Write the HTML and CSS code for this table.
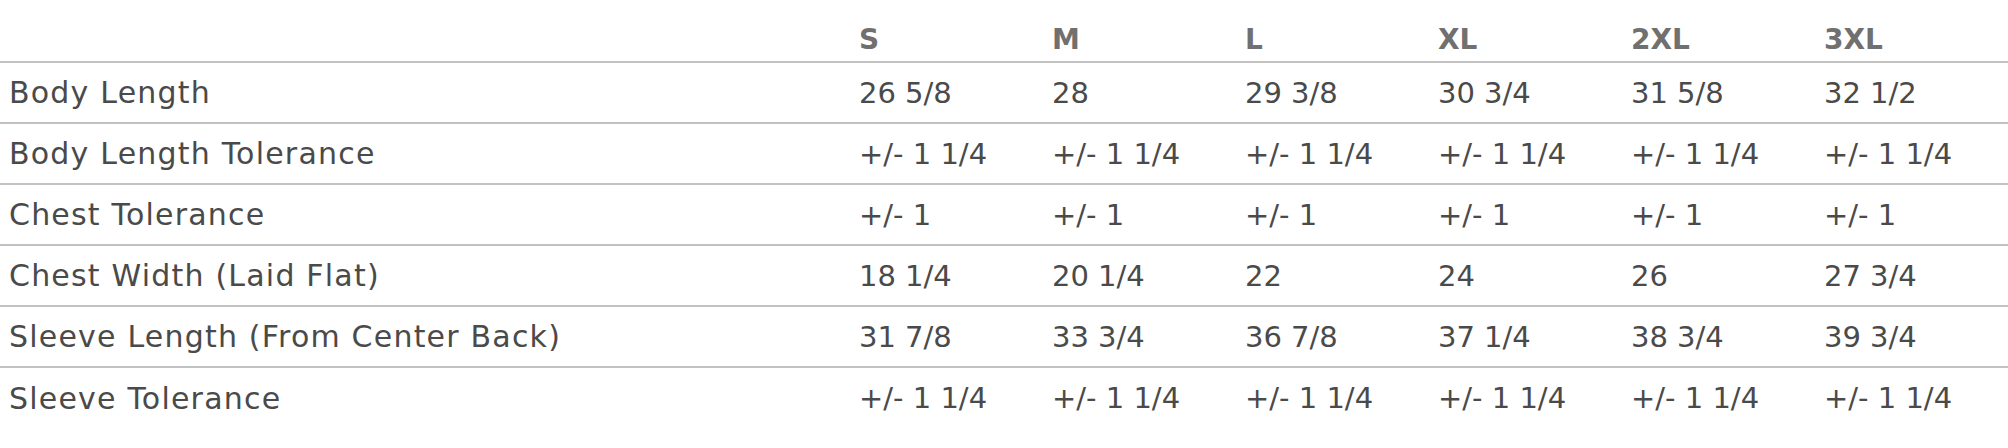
FILE: index.html
```html
<!DOCTYPE html>
<html lang="en">
<head>
<meta charset="utf-8">
<title>Size Chart</title>
<link rel="stylesheet" href="styles.css">
</head>
<body>
<table class="size-chart">
  <colgroup>
    <col class="col-label">
    <col class="col-size"><col class="col-size"><col class="col-size">
    <col class="col-size"><col class="col-size"><col class="col-size">
  </colgroup>
  <thead>
    <tr>
      <th></th><th>S</th><th>M</th><th>L</th><th>XL</th><th>2XL</th><th>3XL</th>
    </tr>
  </thead>
  <tbody>
    <tr><td class="label">Body Length</td><td>26 5/8</td><td>28</td><td>29 3/8</td><td>30 3/4</td><td>31 5/8</td><td>32 1/2</td></tr>
    <tr><td class="label">Body Length Tolerance</td><td>+/- 1 1/4</td><td>+/- 1 1/4</td><td>+/- 1 1/4</td><td>+/- 1 1/4</td><td>+/- 1 1/4</td><td>+/- 1 1/4</td></tr>
    <tr><td class="label">Chest Tolerance</td><td>+/- 1</td><td>+/- 1</td><td>+/- 1</td><td>+/- 1</td><td>+/- 1</td><td>+/- 1</td></tr>
    <tr><td class="label">Chest Width (Laid Flat)</td><td>18 1/4</td><td>20 1/4</td><td>22</td><td>24</td><td>26</td><td>27 3/4</td></tr>
    <tr><td class="label">Sleeve Length (From Center Back)</td><td>31 7/8</td><td>33 3/4</td><td>36 7/8</td><td>37 1/4</td><td>38 3/4</td><td>39 3/4</td></tr>
    <tr><td class="label">Sleeve Tolerance</td><td>+/- 1 1/4</td><td>+/- 1 1/4</td><td>+/- 1 1/4</td><td>+/- 1 1/4</td><td>+/- 1 1/4</td><td>+/- 1 1/4</td></tr>
  </tbody>
</table>
</body>
</html>
```

FILE: styles.css
```css
html, body {
  margin: 0;
  padding: 0;
  background: #ffffff;
}

.size-chart {
  width: 2008px;
  border-collapse: collapse;
  table-layout: fixed;
  font-family: "DejaVu Sans", "Liberation Sans", sans-serif;
  color: #4a4a4a;
}

.col-label { width: 850px; }
.col-size { width: 193px; }

.size-chart th,
.size-chart td {
  text-align: left;
  padding: 0 0 0 9px;
  white-space: nowrap;
}

.size-chart th {
  height: 62px;
  font-size: 28px;
  font-weight: 700;
  color: #707070;
  vertical-align: bottom;
  padding-bottom: 5px;
  border-bottom: 2px solid #c2c2c2;
  box-sizing: border-box;
}

.size-chart td {
  height: 61px;
  font-size: 29px;
  font-weight: 400;
  vertical-align: middle;
  border-bottom: 2px solid #c2c2c2;
  box-sizing: border-box;
}

.size-chart td.label {
  font-size: 30px;
  letter-spacing: 1.2px;
}

.size-chart tbody tr:last-child td {
  border-bottom: none;
}
```
